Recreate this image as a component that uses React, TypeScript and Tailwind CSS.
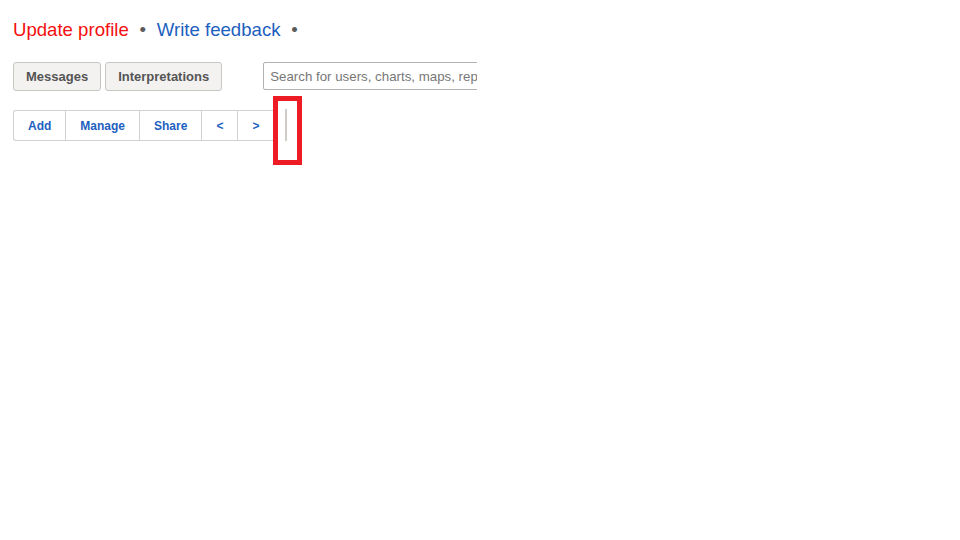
import React from "react";

const font = { fontFamily: "'Liberation Sans', Arial, sans-serif" };

export default function App() {
  return (
    <div className="relative w-[960px] h-[540px] bg-white overflow-hidden" style={font}>
      {/* Header links */}
      <div className="pl-[13px] pt-[16px] flex items-baseline text-[18.6px] leading-normal">
        <span className="text-[#f30f0f]">Update profile</span>
        <span className="mx-[10.75px] text-[#5a5a5a]">•</span>
        <span className="text-[#1d5fbf]">Write feedback</span>
        <span className="mx-[10.75px] text-[#5a5a5a]">•</span>
      </div>

      {/* Buttons + search */}
      <div className="mt-[18px] pl-[13px] flex items-start h-[29px]">
        <button className="h-[29px] px-[12px] pt-[1px] bg-[#f3f2f0] border border-[#c8c6c3] rounded-[3px] text-[13px] font-bold text-[#555555]">
          Messages
        </button>
        <button className="ml-[4px] h-[29px] px-[12px] pt-[1px] bg-[#f3f2f0] border border-[#c8c6c3] rounded-[3px] text-[13px] font-bold text-[#555555]">
          Interpretations
        </button>
        <div className="ml-[41px] w-[214px] h-[28px] overflow-hidden">
          <input
            readOnly
            placeholder="Search for users, charts, maps, reports"
            className="w-[300px] h-[28px] border border-[#b4b2af] rounded-[2px] pl-[6px] pt-[1px] text-[13.3px] text-[#333] placeholder:text-[#777777] outline-none"
            style={font}
          />
        </div>
      </div>

      {/* Dashboard toolbar */}
      <div className="mt-[19px] pl-[13px] flex items-center">
        <div className="flex h-[31px] border-y border-l border-[#d3d1ce] rounded-l-[3px] bg-white">
          {["Add", "Manage", "Share", "<", ">"].map((label) => (
            <button
              key={label}
              className="px-[14px] pt-[1px] h-full border-r border-[#d3d1ce] text-[12px] font-bold text-[#1d5fbf]"
            >
              {label}
            </button>
          ))}
        </div>
        <div className="ml-[11px] w-[2px] h-[32px] bg-[#cfccc8] -mt-[1px]" />
      </div>

      {/* Highlight box */}
      <div className="absolute left-[273px] top-[96px] w-[29px] h-[69px] border-[5px] border-[#ed1c24]" />
    </div>
  );
}
